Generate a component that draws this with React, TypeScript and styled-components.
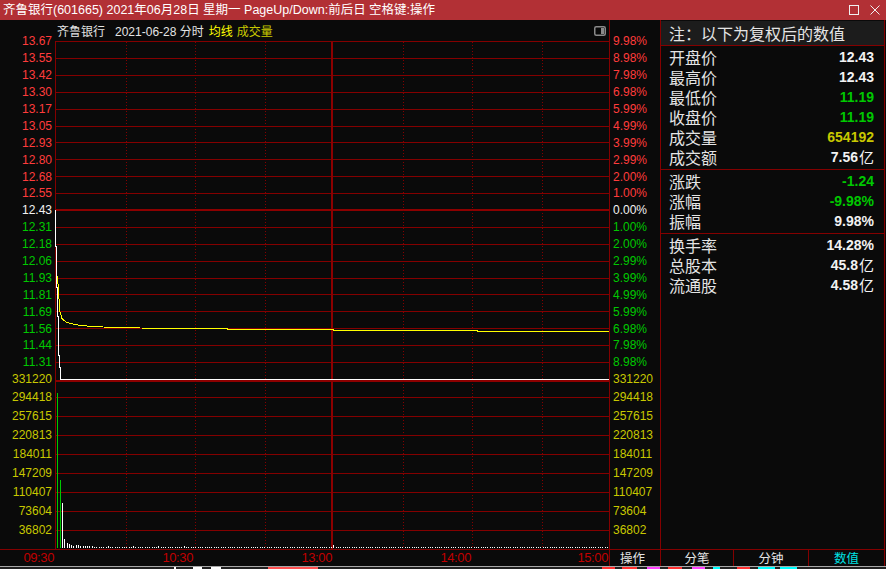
import React from 'react';
import styled, { createGlobalStyle } from 'styled-components';

const COLORS = {
  grid: '#840000',
  red: '#ff3c3c',
  green: '#00c800',
  white: '#f2f2f2',
  yellow: '#c8c800',
  bright: '#ffff00',
  text: '#e4e4e4',
  time: '#c00000',
  cyan: '#00e4e4',
};

type Tone = 'red' | 'green' | 'white' | 'yellow';

const GlobalStyle = createGlobalStyle`
  html, body { margin: 0; padding: 0; background: #0a0a0a; overflow: hidden; }
  body { font-family: "Liberation Sans", "Noto Sans CJK SC", sans-serif; }
  * { box-sizing: border-box; }
`;

const Window = styled.div`
  width: 886px;
  height: 569px;
  display: flex;
  flex-direction: column;
  background: #0a0a0a;
  overflow: hidden;
`;

const TitleBar = styled.div`
  height: 20px;
  flex: none;
  background: #b23035;
  display: flex;
  align-items: center;
  padding-left: 3px;
  color: #ffffff;
  font-size: 12.5px;
`;

const TitleText = styled.span`
  flex: 1;
  white-space: nowrap;
  line-height: 20px;
`;

const TitleButtons = styled.div`
  display: flex;
  align-items: center;
  gap: 11px;
  padding-right: 6px;
`;

const Main = styled.div`
  display: flex;
  height: 546px;
  flex: none;
`;

const ChartColumn = styled.div`
  width: 609px;
  display: flex;
  flex-direction: column;
`;

const ChartHeader = styled.div`
  height: 21px;
  display: flex;
  align-items: center;
  padding-left: 57px;
  padding-right: 3px;
  font-size: 12px;
  color: ${COLORS.text};
  white-space: nowrap;
`;

const HeaderItem = styled.span<{ $color?: string; $gap?: number }>`
  color: ${(p) => p.$color ?? COLORS.text};
  margin-right: ${(p) => p.$gap ?? 5}px;
`;

const HeaderIcon = styled.svg`
  margin-left: auto;
  display: block;
`;

const PlotRow = styled.div`
  height: 508px;
  display: flex;
  flex: none;
`;

const LeftAxis = styled.div`
  width: 55px;
  flex: none;
`;

const AxisLabels = styled.div<{ $align: 'left' | 'right' }>`
  display: grid;
  grid-template-rows: repeat(20, 16.9px) 17px repeat(8, 19px);
  margin-top: -8px;
  font-size: 12px;
  ${(p) =>
    p.$align === 'right'
      ? 'padding-right: 3px; justify-items: end;'
      : 'padding-left: 3px; justify-items: start;'}
`;

const AxisLabel = styled.span<{ $tone: Tone }>`
  display: flex;
  align-items: center;
  color: ${(p) => COLORS[p.$tone]};
  line-height: 1;
  white-space: nowrap;
`;

const PlotSvg = styled.svg`
  display: block;
  flex: none;
`;

const TimeRow = styled.div`
  height: 17px;
  flex: none;
  display: flex;
  align-items: center;
  padding-bottom: 2px;
  border-top: 1px solid ${COLORS.grid};
  font-size: 13px;
  letter-spacing: -0.4px;
  color: ${COLORS.time};
`;

const TimeCell = styled.span<{ $w: number }>`
  width: ${(p) => p.$w}px;
  flex: none;
  text-align: right;
  line-height: 1;
`;

const RightAxisCol = styled.div`
  width: 51px;
  flex: none;
  display: flex;
  flex-direction: column;
  border-left: 1px solid ${COLORS.grid};
`;

const AxisSpacer = styled.div`
  height: 21px;
  flex: none;
`;

const AxisArea = styled.div`
  height: 508px;
  flex: none;
`;

const OpCell = styled.div`
  height: 17px;
  flex: none;
  border-top: 1px solid ${COLORS.grid};
  display: flex;
  align-items: center;
  padding-left: 10px;
  padding-bottom: 1px;
  font-size: 12.5px;
  color: ${COLORS.text};
`;

const InfoPanel = styled.div`
  width: 225px;
  flex: none;
  display: flex;
  flex-direction: column;
  border-left: 1px solid ${COLORS.grid};
  border-right: 1px solid ${COLORS.grid};
`;

const InfoHeader = styled.div`
  margin-top: 1px;
  height: 25px;
  flex: none;
  background: #1c1c1c;
  border-bottom: 1px solid ${COLORS.grid};
  display: flex;
  align-items: center;
  padding-left: 8px;
  font-size: 16px;
  color: ${COLORS.text};
  white-space: nowrap;
`;

const InfoGroup = styled.div<{ $sep?: boolean }>`
  padding: 1px 0 ${(p) => (p.$sep ? 2 : 0)}px;
  border-bottom: ${(p) => (p.$sep ? `1px solid ${COLORS.grid}` : 'none')};
  flex: none;
`;

const InfoRow = styled.div`
  height: 20px;
  display: flex;
  align-items: center;
  justify-content: space-between;
  padding: 0 10px 0 8px;
`;

const InfoLabel = styled.span`
  font-size: 16px;
  color: ${COLORS.text};
  font-family: "Noto Sans CJK SC", sans-serif;
  line-height: 1;
`;

const InfoValue = styled.span<{ $color: string }>`
  font-size: 14px;
  font-weight: bold;
  color: ${(p) => p.$color};
  line-height: 1;
  display: flex;
  align-items: center;
`;

const Unit = styled.span`
  font-size: 15px;
  font-weight: normal;
  margin-left: 1px;
`;

const Filler = styled.div`
  flex: 1;
`;

const TabRow = styled.div`
  height: 17px;
  flex: none;
  display: flex;
  border-top: 1px solid ${COLORS.grid};
`;

const Tab = styled.div<{ $w: number; $active?: boolean; $sep?: boolean }>`
  width: ${(p) => p.$w}px;
  flex: none;
  display: flex;
  align-items: center;
  justify-content: center;
  padding-bottom: 1px;
  font-size: 12.5px;
  color: ${(p) => (p.$active ? COLORS.cyan : COLORS.text)};
  border-left: ${(p) => (p.$sep ? `1px solid ${COLORS.grid}` : 'none')};
`;

const BottomStrip = styled.div`
  height: 3px;
  flex: none;
  border-top: 1px solid #a8a8a8;
  background: #202020;
  display: flex;
`;

const StripSeg = styled.span<{ $color: string }>`
  height: 2px;
  flex: none;
  background: ${(p) => p.$color};
`;

const leftLabels: [string, Tone][] = [
  ['13.67', 'red'], ['13.55', 'red'], ['13.42', 'red'], ['13.30', 'red'], ['13.17', 'red'],
  ['13.05', 'red'], ['12.93', 'red'], ['12.80', 'red'], ['12.68', 'red'], ['12.55', 'red'],
  ['12.43', 'white'],
  ['12.31', 'green'], ['12.18', 'green'], ['12.06', 'green'], ['11.93', 'green'], ['11.81', 'green'],
  ['11.69', 'green'], ['11.56', 'green'], ['11.44', 'green'], ['11.31', 'green'],
  ['331220', 'yellow'], ['294418', 'yellow'], ['257615', 'yellow'], ['220813', 'yellow'],
  ['184011', 'yellow'], ['147209', 'yellow'], ['110407', 'yellow'], ['73604', 'yellow'], ['36802', 'yellow'],
];

const rightLabels: [string, Tone][] = [
  ['9.98%', 'red'], ['8.98%', 'red'], ['7.98%', 'red'], ['6.98%', 'red'], ['5.99%', 'red'],
  ['4.99%', 'red'], ['3.99%', 'red'], ['2.99%', 'red'], ['2.00%', 'red'], ['1.00%', 'red'],
  ['0.00%', 'white'],
  ['1.00%', 'green'], ['2.00%', 'green'], ['2.99%', 'green'], ['3.99%', 'green'], ['4.99%', 'green'],
  ['5.99%', 'green'], ['6.98%', 'green'], ['7.98%', 'green'], ['8.98%', 'green'],
  ['331220', 'yellow'], ['294418', 'yellow'], ['257615', 'yellow'], ['220813', 'yellow'],
  ['184011', 'yellow'], ['147209', 'yellow'], ['110407', 'yellow'], ['73604', 'yellow'], ['36802', 'yellow'],
];

const PLOT_W = 554;
const PLOT_H = 508;

const priceLines = Array.from({ length: 20 }, (_, i) => Math.round(i * 16.9));
const volumeLines = Array.from({ length: 8 }, (_, j) => 356 + j * 19);
const dottedX = [71.5, 140.5, 210.5, 348.5, 417.5, 487.5];

type Bar = { x: number; h: number; color: string };
const headBars: [number, string][] = [
  [155, COLORS.green], [68, COLORS.green], [45, '#ffffff'], [9, '#ffffff'],
  [5, '#ffffff'], [4, '#ffffff'], [3, '#ffffff'], [2, '#ffffff'], [3, '#ffffff'], [3, '#ffffff'],
  [2, '#ffffff'], [2, '#ffffff'], [2, '#ffffff'], [2, '#ffffff'], [2, '#ffffff'], [2, '#ffffff'],
];
const bars: Bar[] = Array.from({ length: 240 }, (_, i) => {
  const x = Math.round(2.3 + i * 2.3);
  if (i < headBars.length) return { x, h: headBars[i][0], color: headBars[i][1] };
  let h = 1;
  if (i === 120) h = 3;
  else if ((i * 7) % 11 === 0 && i < 60) h = 2;
  return { x, h, color: '#ffffff' };
});

const pricePath =
  '0.5,169 0.5,205 1.5,205 1.5,246 2.5,246 2.5,275 3.5,275 3.5,314 4.5,314 4.5,326 5.5,326 5.5,338.5 554,338.5';
const avgPath =
  '2.5,235 3.5,251 5,271 7,277.5 11.5,281.5 23,284 32,285 48,286 85,287 150,287.5 195,288.5 278,288.5 278,289.5 422,289.5 422,290.5 554,290.5';

const stripSegs: [number, number, string][] = [
  [174, 2, '#ffffff'], [193, 9, '#ffffff'], [211, 10, '#ffffff'], [268, 50, '#ff5050'],
  [602, 13, '#ff3030'], [622, 15, '#ff3030'], [647, 13, '#ff40ff'], [668, 14, '#ff3030'],
  [692, 13, '#ff40ff'], [713, 7, '#00ffff'], [737, 13, '#ff3030'], [758, 17, '#00ffff'],
  [780, 17, '#00ffff'],
];

function Plot() {
  return (
    <PlotSvg width={PLOT_W} height={PLOT_H} viewBox={`0 0 ${PLOT_W} ${PLOT_H}`}>
      <g shapeRendering="crispEdges">
        {priceLines.map((y, i) =>
          i === 10 ? (
            <rect key={`p${i}`} x={0} y={168} width={PLOT_W} height={2} fill="#8c0000" />
          ) : (
            <line key={`p${i}`} x1={0} x2={PLOT_W} y1={y + 0.5} y2={y + 0.5} stroke={COLORS.grid} strokeWidth={1} />
          )
        )}
        <rect x={0} y={339} width={PLOT_W} height={2} fill="#8c0000" />
        {volumeLines.map((y) => (
          <line key={`v${y}`} x1={0} x2={PLOT_W} y1={y + 0.5} y2={y + 0.5} stroke={COLORS.grid} strokeWidth={1} />
        ))}
        {dottedX.map((x) => (
          <line key={`d${x}`} x1={x} x2={x} y1={1} y2={PLOT_H} stroke={COLORS.grid} strokeWidth={1} strokeDasharray="1 2" />
        ))}
        <line x1={277} x2={277} y1={0} y2={PLOT_H} stroke="#8c0000" strokeWidth={1.6} />
        <line x1={0.5} x2={0.5} y1={0} y2={PLOT_H} stroke={COLORS.grid} strokeWidth={1} />
        <line x1={0} x2={PLOT_W} y1={0.5} y2={0.5} stroke={COLORS.grid} strokeWidth={1} />
        {bars.map((b, i) => (
          <rect key={`b${i}`} x={b.x} y={507 - b.h} width={1} height={b.h} fill={b.color} />
        ))}
        <polyline points={pricePath} fill="none" stroke="#ffffff" strokeWidth={1} />
      </g>
      <polyline points={avgPath} fill="none" stroke={COLORS.bright} strokeWidth={1} shapeRendering="crispEdges" />
    </PlotSvg>
  );
}

const infoGroups: { rows: [string, string, string, string?][]; sep: boolean }[] = [
  {
    sep: true,
    rows: [
      ['开盘价', '12.43', COLORS.white],
      ['最高价', '12.43', COLORS.white],
      ['最低价', '11.19', COLORS.green],
      ['收盘价', '11.19', COLORS.green],
      ['成交量', '654192', COLORS.yellow],
      ['成交额', '7.56', COLORS.white, '亿'],
    ],
  },
  {
    sep: true,
    rows: [
      ['涨跌', '-1.24', COLORS.green],
      ['涨幅', '-9.98%', COLORS.green],
      ['振幅', '9.98%', COLORS.white],
    ],
  },
  {
    sep: false,
    rows: [
      ['换手率', '14.28%', COLORS.white],
      ['总股本', '45.8', COLORS.white, '亿'],
      ['流通股', '4.58', COLORS.white, '亿'],
    ],
  },
];

export default function App() {
  let stripCursor = 0;
  return (
    <Window>
      <GlobalStyle />
      <TitleBar>
        <TitleText>齐鲁银行(601665) 2021年06月28日 星期一 PageUp/Down:前后日 空格键:操作</TitleText>
        <TitleButtons>
          <svg width="10" height="10" viewBox="0 0 10 10">
            <rect x="0.5" y="0.5" width="9" height="9" fill="none" stroke="#f0f0f0" strokeWidth="1" />
          </svg>
          <svg width="10" height="10" viewBox="0 0 10 10">
            <path d="M0.5 0.5 L9.5 9.5 M9.5 0.5 L0.5 9.5" stroke="#f0f0f0" strokeWidth="1" fill="none" />
          </svg>
        </TitleButtons>
      </TitleBar>
      <Main>
        <ChartColumn>
          <ChartHeader>
            <HeaderItem $gap={10}>齐鲁银行</HeaderItem>
            <HeaderItem>2021-06-28 分时</HeaderItem>
            <HeaderItem $color={COLORS.bright} $gap={4}>均线</HeaderItem>
            <HeaderItem $color={COLORS.yellow}>成交量</HeaderItem>
            <HeaderIcon width="12" height="10" viewBox="0 0 12 10">
              <rect x="0.75" y="0.75" width="10.5" height="8.5" rx="1.5" fill="none" stroke="#8a8a8a" strokeWidth="1.5" />
              <rect x="7" y="2" width="3" height="6" fill="#8a8a8a" />
            </HeaderIcon>
          </ChartHeader>
          <PlotRow>
            <LeftAxis>
              <AxisLabels $align="right">
                {leftLabels.map(([t, tone], i) => (
                  <AxisLabel key={i} $tone={tone}>{t}</AxisLabel>
                ))}
              </AxisLabels>
            </LeftAxis>
            <Plot />
          </PlotRow>
          <TimeRow>
            <TimeCell $w={54}>09:30</TimeCell>
            <TimeCell $w={139}>10:30</TimeCell>
            <TimeCell $w={139}>13:00</TimeCell>
            <TimeCell $w={139}>14:00</TimeCell>
            <TimeCell $w={137}>15:00</TimeCell>
          </TimeRow>
        </ChartColumn>
        <RightAxisCol>
          <AxisSpacer />
          <AxisArea>
            <AxisLabels $align="left">
              {rightLabels.map(([t, tone], i) => (
                <AxisLabel key={i} $tone={tone}>{t}</AxisLabel>
              ))}
            </AxisLabels>
          </AxisArea>
          <OpCell>操作</OpCell>
        </RightAxisCol>
        <InfoPanel>
          <InfoHeader>注：以下为复权后的数值</InfoHeader>
          {infoGroups.map((g, gi) => (
            <InfoGroup key={gi} $sep={g.sep}>
              {g.rows.map(([label, value, color, unit]) => (
                <InfoRow key={label}>
                  <InfoLabel>{label}</InfoLabel>
                  <InfoValue $color={color}>
                    {value}
                    {unit && <Unit>{unit}</Unit>}
                  </InfoValue>
                </InfoRow>
              ))}
            </InfoGroup>
          ))}
          <Filler />
          <TabRow>
            <Tab $w={72}>分笔</Tab>
            <Tab $w={75} $sep>分钟</Tab>
            <Tab $w={76} $sep $active>数值</Tab>
          </TabRow>
        </InfoPanel>
      </Main>
      <BottomStrip>
        {stripSegs.map(([x, w, c], i) => {
          const gap = x - stripCursor;
          stripCursor = x + w;
          return (
            <React.Fragment key={i}>
              <StripSeg $color="transparent" style={{ width: gap }} />
              <StripSeg $color={c} style={{ width: w }} />
            </React.Fragment>
          );
        })}
      </BottomStrip>
    </Window>
  );
}
